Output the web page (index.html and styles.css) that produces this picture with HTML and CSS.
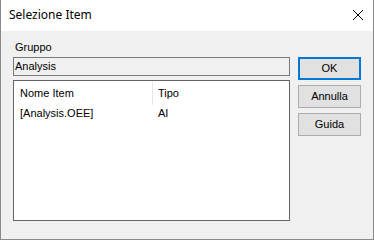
FILE: index.html
```html
<!DOCTYPE html>
<html lang="it">

<head>
    <meta charset="UTF-8">
    <title>Selezione Item</title>
    <link rel="stylesheet" href="styles.css">
</head>

<body>
    <div class="window">
        <div class="titlebar">
            <span class="title">Selezione Item</span>
            <svg class="close" width="12" height="12" viewBox="0 0 12 12">
                <path d="M1 1 L11 11 M11 1 L1 11" stroke="#000" stroke-width="1" fill="none"/>
            </svg>
        </div>

        <div class="content">
            <div class="main">
                <div class="label">Gruppo</div>
                <div class="field">Analysis</div>
                <div class="list">
                    <div class="row header">
                        <div class="col name">Nome Item</div>
                        <div class="col type">Tipo</div>
                    </div>
                    <div class="row">
                        <div class="col name">[Analysis.OEE]</div>
                        <div class="col type">AI</div>
                    </div>
                </div>
            </div>

            <div class="buttons">
                <button class="btn default">OK</button>
                <button class="btn">Annulla</button>
                <button class="btn">Guida</button>
            </div>
        </div>
    </div>
</body>

</html>
```

FILE: styles.css
```css
html, body {
    margin: 0;
    padding: 0;
    background-color: #f0f0f0;
}

.window {
    width: 372px;
    height: 239px;
    border: 1px solid #8a8a8a;
    border-top: none;
    background-color: #f0f0f0;
    font-family: "Liberation Sans", Arial, sans-serif;
    font-size: 11px;
    color: #000;
}

.titlebar {
    height: 31px;
    background-color: #fff;
    display: flex;
    align-items: center;
    justify-content: space-between;
    padding: 0 9px 0 8px;
}

.title {
    font-family: "Noto Sans", sans-serif;
    font-size: 12px;
    padding-bottom: 2px;
}

.close {
    margin-bottom: 1px;
}

.content {
    display: flex;
    padding: 10px 0 0 12px;
    gap: 8px;
}

.main {
    width: 277px;
}

.label {
    height: 13px;
    line-height: 13px;
    padding-left: 2px;
}

.field {
    margin-top: 3px;
    height: 17px;
    line-height: 17px;
    border: 1px solid #7a7a7a;
    padding-left: 1px;
}

.list {
    margin-top: 4px;
    height: 139px;
    border: 1px solid #646464;
    background-color: #fff;
}

.row {
    display: flex;
    height: 17px;
    line-height: 17px;
}

.row.header {
    height: 23px;
    line-height: 23px;
    margin-top: 1px;
}

.col.name {
    width: 132px;
    padding-left: 6px;
}

.header .col.name {
    border-right: 1px solid #e5e5e5;
}

.col.type {
    padding-left: 6px;
}

.header .col.type {
    padding-left: 5px;
}

.buttons {
    display: flex;
    flex-direction: column;
    gap: 5px;
    padding-top: 16px;
}

.btn {
    width: 63px;
    height: 23px;
    margin: 0;
    padding: 0 0 1px;
    border: 1px solid #adadad;
    background-color: #e1e1e1;
    font-family: "Liberation Sans", Arial, sans-serif;
    font-size: 11px;
    color: #000;
}

.btn.default {
    border: 2px solid #0078d7;
}
```
